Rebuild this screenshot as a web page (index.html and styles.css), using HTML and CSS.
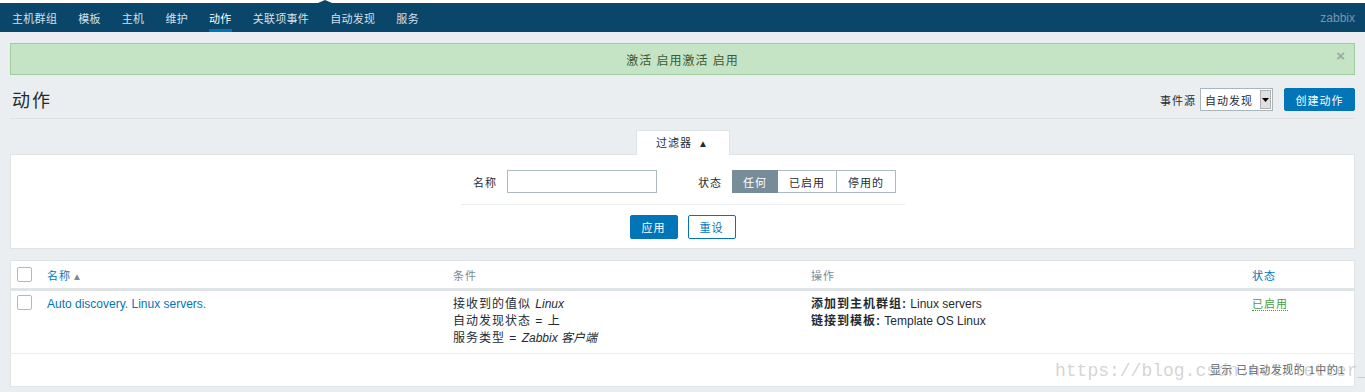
FILE: index.html
```html
<!DOCTYPE html>
<html lang="zh-CN">
<head>
    <meta charset="UTF-8">
    <meta name="viewport" content="width=device-width, initial-scale=1.0">
    <title>动作</title>
    <link rel="stylesheet" href="styles.css">
</head>
<body>
    <div class="top-strip"><span class="top-arrow"></span></div>
    <nav class="subnav">
        <ul class="nav-list">
            <li><a href="#">主机群组</a></li>
            <li><a href="#">模板</a></li>
            <li><a href="#">主机</a></li>
            <li><a href="#">维护</a></li>
            <li class="active"><a href="#">动作</a></li>
            <li><a href="#">关联项事件</a></li>
            <li><a href="#">自动发现</a></li>
            <li><a href="#">服务</a></li>
        </ul>
        <span class="brand">zabbix</span>
    </nav>

    <main class="wrapper">
        <div class="msg-good">
            <span>激活 启用激活 启用</span>
            <span class="msg-close">&times;</span>
        </div>

        <header class="page-header">
            <h1>动作</h1>
            <div class="header-controls">
                <label class="ctrl-label">事件源</label>
                <div class="select-box">
                    <span class="select-text">自动发现</span>
                    <span class="select-arrow"><svg width="7" height="4" viewBox="0 0 7 4"><path d="M0 0h7L3.5 4z" fill="#000"/></svg></span>
                </div>
                <button class="btn-primary">创建动作</button>
            </div>
        </header>

        <div class="filter-tabs">
            <span class="filter-tab">过滤器 <span class="tab-arrow">▲</span></span>
        </div>
        <section class="filter-box">
            <div class="filter-row">
                <label class="form-label">名称</label>
                <input type="text" class="text-input">
                <label class="form-label status-label">状态</label>
                <div class="radio-seg">
                    <span class="seg selected">任何</span>
                    <span class="seg">已启用</span>
                    <span class="seg">停用的</span>
                </div>
            </div>
            <div class="filter-sep"></div>
            <div class="filter-buttons">
                <button class="btn-primary btn-small">应用</button>
                <button class="btn-alt btn-small">重设</button>
            </div>
        </section>

        <section class="list-box">
            <table class="list-table">
                <colgroup>
                    <col class="c-check">
                    <col class="c-name">
                    <col class="c-cond">
                    <col class="c-ops">
                    <col class="c-status">
                </colgroup>
                <thead>
                    <tr>
                        <th><span class="checkbox"></span></th>
                        <th><a href="#" class="sort-link">名称</a><span class="sort-arrow">▲</span></th>
                        <th class="plain">条件</th>
                        <th class="plain">操作</th>
                        <th><a href="#" class="sort-link">状态</a></th>
                    </tr>
                </thead>
                <tbody>
                    <tr class="data-row">
                        <td><span class="checkbox"></span></td>
                        <td><a href="#" class="link">Auto discovery. Linux servers.</a></td>
                        <td>
                            接收到的值似 <em>Linux</em><br>
                            自动发现状态 = 上<br>
                            服务类型 = <em>Zabbix 客户端</em>
                        </td>
                        <td>
                            <b>添加到主机群组:</b> Linux servers<br>
                            <b>链接到模板:</b> Template OS Linux
                        </td>
                        <td><a href="#" class="status-on">已启用</a></td>
                    </tr>
                </tbody>
            </table>
            <div class="table-stats">显示 已自动发现的 1中的1</div>
        </section>
    </main>

    <div class="watermark">https://blog.csdn.net/letter_A</div>
</body>
</html>
```

FILE: styles.css
```css
body {
    margin: 0;
    font-family: "Liberation Sans", Arial, "Noto Sans CJK SC", sans-serif;
    font-size: 12px;
    color: #1f2c33;
    background-color: #ebeef0;
}
a {
    text-decoration: none;
}
.top-strip {
    position: relative;
    height: 3px;
    background-color: #ffffff;
}
.top-arrow {
    position: absolute;
    left: 318px;
    top: 0;
    border-left: 7px solid transparent;
    border-right: 7px solid transparent;
    border-bottom: 3px solid #0a466a;
}
.subnav {
    display: flex;
    justify-content: space-between;
    align-items: stretch;
    height: 29px;
    background-color: #0a466a;
}
.nav-list {
    display: flex;
    margin: 0;
    padding: 0 0 0 1px;
    list-style: none;
}
.nav-list li {
    display: flex;
    align-items: center;
    margin: 0 10.5px;
    padding-top: 3px;
    border-bottom: 3px solid transparent;
}
.nav-list li:first-child {
    margin-left: 11px;
}
.nav-list li a {
    color: #d4e0e8;
    font-size: 11px;
    letter-spacing: 0.3px;
}
.nav-list li.active {
    border-bottom-color: #0275b8;
}
.nav-list li.active a {
    color: #ffffff;
}
.brand {
    display: flex;
    align-items: center;
    padding-right: 10px;
    color: #7896ab;
    font-size: 12px;
}
.wrapper {
    padding: 11px 10px 0 10px;
}
.msg-good {
    position: relative;
    display: flex;
    justify-content: center;
    align-items: center;
    height: 30px;
    background-color: #c5e3c5;
    border: 1px solid #9ccf9c;
    color: #3a5a3a;
    letter-spacing: 1px;
}
.msg-close {
    position: absolute;
    right: 8px;
    top: 3px;
    color: #9aaaa0;
    font-size: 15px;
    font-weight: bold;
}
.page-header {
    display: flex;
    justify-content: space-between;
    align-items: center;
    height: 23px;
    padding: 13px 0 7px 0;
    border-bottom: 1px solid #dde2e5;
}
.page-header h1 {
    margin: 3px 0 0 2px;
    font-size: 18px;
    line-height: 23px;
    font-weight: normal;
    letter-spacing: 2px;
}
.header-controls {
    display: flex;
    align-items: center;
}
.ctrl-label {
    margin-right: 4px;
    font-size: 11px;
    letter-spacing: 1px;
}
.select-box {
    display: flex;
    align-items: stretch;
    width: 71px;
    height: 21px;
    background-color: #ffffff;
    border: 1px solid #a9b6bd;
}
.select-text {
    flex: 1;
    display: flex;
    align-items: center;
    padding-left: 4px;
    font-size: 11px;
    letter-spacing: 1px;
}
.select-arrow {
    display: flex;
    align-items: center;
    justify-content: center;
    width: 9px;
    margin: 1px;
    background-color: #e0e0e0;
    border: 1px solid #b0b0b0;
}
.btn-primary {
    height: 23px;
    margin-left: 11px;
    padding: 0 10.5px;
    font-family: inherit;
    font-size: 11px;
    letter-spacing: 1px;
    color: #ffffff;
    background-color: #0275b8;
    border: 1px solid #0275b8;
    border-radius: 2px;
}
.filter-tabs {
    display: flex;
    justify-content: center;
    margin-top: 11px;
}
.filter-tab {
    position: relative;
    width: 92px;
    height: 24px;
    margin-bottom: -1px;
    line-height: 24px;
    text-align: center;
    font-size: 11px;
    letter-spacing: 1px;
    background-color: #ffffff;
    border: 1px solid #dfe4e7;
    border-bottom: none;
}
.tab-arrow {
    font-size: 10px;
    margin-left: 2px;
    color: #1f2c33;
}
.filter-box {
    display: flex;
    flex-direction: column;
    align-items: center;
    padding: 15px 0 9px 0;
    background-color: #ffffff;
    border: 1px solid #dfe4e7;
}
.filter-row {
    display: flex;
    align-items: center;
    height: 23px;
    padding-left: 4px;
}
.form-label {
    margin-right: 10px;
    font-size: 11px;
    letter-spacing: 1px;
}
.status-label {
    margin-left: 41px;
}
.text-input {
    width: 146px;
    height: 19px;
    margin: 0;
    padding: 1px;
    border: 1px solid #acbbc2;
}
.radio-seg {
    display: flex;
    height: 23px;
}
.seg {
    display: flex;
    align-items: center;
    justify-content: center;
    box-sizing: border-box;
    width: 59px;
    font-size: 11px;
    letter-spacing: 1px;
    white-space: nowrap;
    border: 1px solid #acbbc2;
    border-left: none;
}
.seg.selected {
    width: 46px;
    background-color: #768d99;
    border: 1px solid #768d99;
    color: #ffffff;
}
.filter-sep {
    width: 444px;
    height: 1px;
    margin: 11px 0 10px 0;
    background-color: #ebeef0;
}
.filter-buttons {
    display: flex;
    gap: 10px;
}
.btn-small {
    width: 48px;
    height: 24px;
    margin-left: 0;
    padding: 0;
}
.btn-alt {
    font-family: inherit;
    font-size: 11px;
    letter-spacing: 1px;
    color: #0275b8;
    background-color: #ffffff;
    border: 1px solid #0275b8;
    border-radius: 2px;
}
.list-box {
    margin-top: 11px;
    background-color: #ffffff;
    border: 1px solid #dfe4e7;
}
.list-table {
    width: 100%;
    border-collapse: collapse;
    table-layout: fixed;
}
.c-check { width: 30px; }
.c-name { width: 406px; }
.c-cond { width: 358px; }
.c-ops { width: 441px; }
.list-table th {
    height: 27px;
    padding: 0 6px;
    text-align: left;
    font-size: 11px;
    font-weight: normal;
    letter-spacing: 1px;
    border-bottom: 3px solid #dfe4e7;
}
.list-table th.plain {
    color: #768d99;
}
.sort-link {
    color: #0275b8;
}
.sort-arrow {
    margin-left: 1px;
    font-size: 10px;
    color: #768d99;
}
.checkbox {
    display: block;
    width: 13px;
    height: 13px;
    border: 1px solid #acbbc2;
    border-radius: 2px;
    background-color: #ffffff;
}
.list-table td {
    padding: 5px 6px 6px 6px;
    vertical-align: top;
    line-height: 17px;
    border-bottom: 1px solid #ebeef0;
}
.list-table td .checkbox {
    margin-top: -1px;
}
.list-table td:nth-child(3) {
    letter-spacing: 1px;
}
.list-table td em {
    letter-spacing: 0;
}
.list-table td b {
    letter-spacing: 1px;
}
.link {
    color: #0275b8;
}
.status-on {
    color: #429e47;
    font-size: 11px;
    letter-spacing: 1px;
    border-bottom: 1px dotted #429e47;
}
.table-stats {
    height: 32px;
    line-height: 32px;
    padding-right: 9px;
    text-align: right;
    font-size: 11px;
    color: #555f66;
    letter-spacing: 0.5px;
}
.watermark {
    position: absolute;
    left: 1055px;
    top: 361px;
    font-family: "Liberation Mono", monospace;
    font-size: 18px;
    color: rgba(170, 170, 170, 0.5);
    white-space: nowrap;
    pointer-events: none;
}
```
